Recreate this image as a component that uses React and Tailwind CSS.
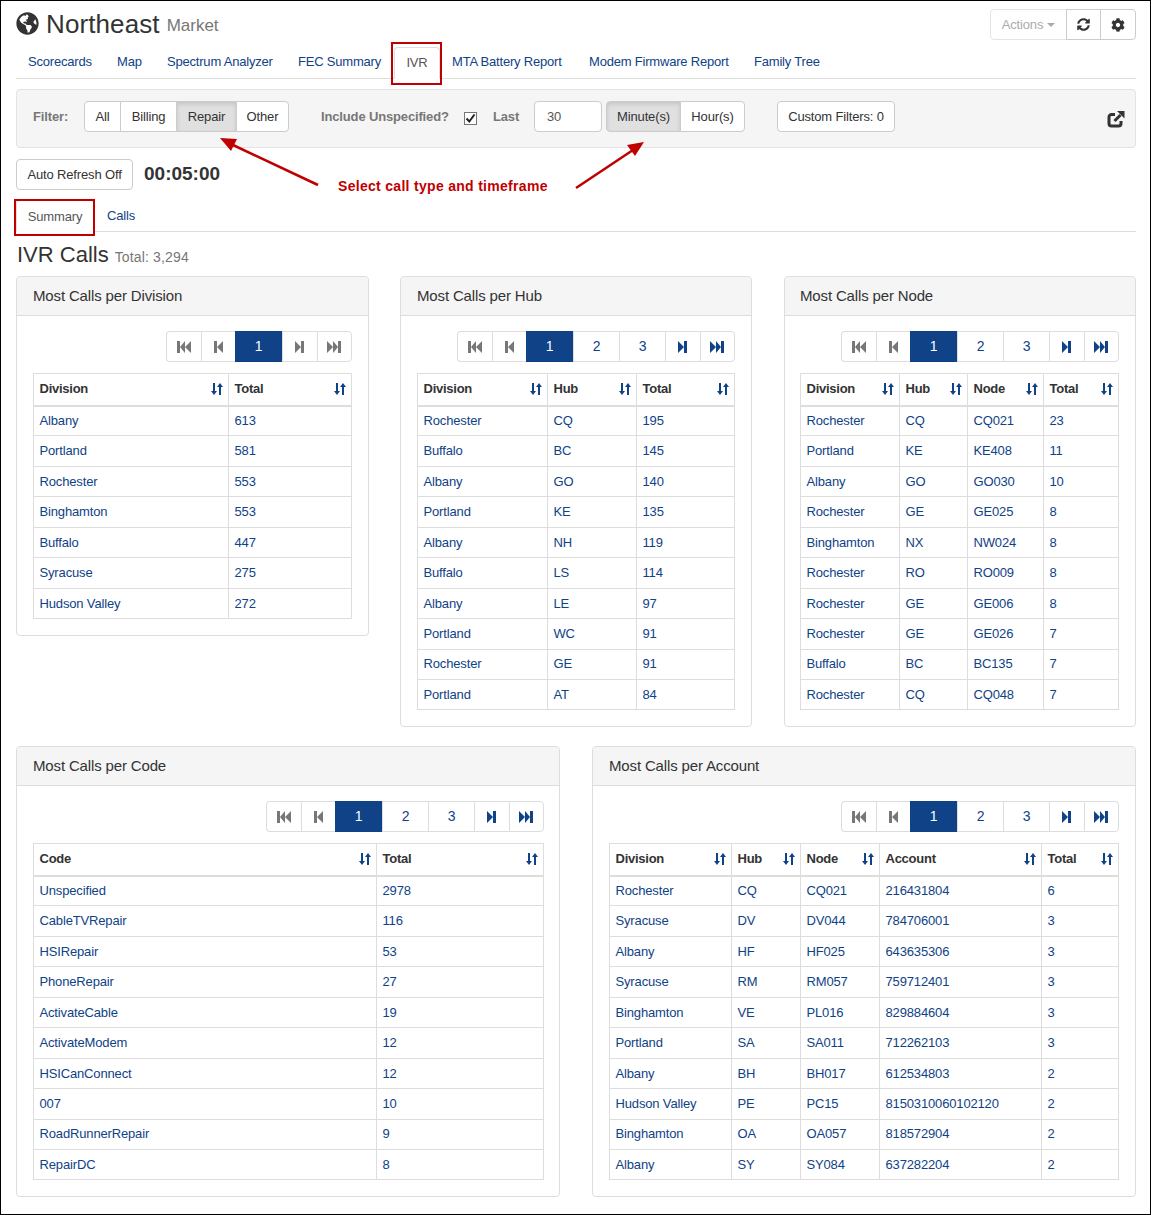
import { FaGlobeAmericas, FaSyncAlt, FaCog } from "react-icons/fa";

const navItems = [
  { label: "Scorecards", w: "w-[89px]" },
  { label: "Map", w: "w-[50px]" },
  { label: "Spectrum Analyzer", w: "w-[131px]" },
  { label: "FEC Summary", w: "w-[108px]" },
  { label: "IVR", w: "w-[46px]" },
  { label: "MTA Battery Report", w: "w-[137px]" },
  { label: "Modem Firmware Report", w: "w-[165px]" },
  { label: "Family Tree", w: "w-[100px]" },
];

const tables = {
  division: {
    title: "Most Calls per Division",
    pages: [],
    widths: [195, 123],
    columns: ["Division", "Total"],
    rows: [
      ["Albany", "613"],
      ["Portland", "581"],
      ["Rochester", "553"],
      ["Binghamton", "553"],
      ["Buffalo", "447"],
      ["Syracuse", "275"],
      ["Hudson Valley", "272"],
    ],
  },
  hub: {
    title: "Most Calls per Hub",
    pages: [2, 3],
    widths: [130, 89, 98],
    columns: ["Division", "Hub", "Total"],
    rows: [
      ["Rochester", "CQ", "195"],
      ["Buffalo", "BC", "145"],
      ["Albany", "GO", "140"],
      ["Portland", "KE", "135"],
      ["Albany", "NH", "119"],
      ["Buffalo", "LS", "114"],
      ["Albany", "LE", "97"],
      ["Portland", "WC", "91"],
      ["Rochester", "GE", "91"],
      ["Portland", "AT", "84"],
    ],
  },
  node: {
    title: "Most Calls per Node",
    pages: [2, 3],
    widths: [99, 68, 76, 75],
    columns: ["Division", "Hub", "Node", "Total"],
    rows: [
      ["Rochester", "CQ", "CQ021", "23"],
      ["Portland", "KE", "KE408", "11"],
      ["Albany", "GO", "GO030", "10"],
      ["Rochester", "GE", "GE025", "8"],
      ["Binghamton", "NX", "NW024", "8"],
      ["Rochester", "RO", "RO009", "8"],
      ["Rochester", "GE", "GE006", "8"],
      ["Rochester", "GE", "GE026", "7"],
      ["Buffalo", "BC", "BC135", "7"],
      ["Rochester", "CQ", "CQ048", "7"],
    ],
  },
  code: {
    title: "Most Calls per Code",
    pages: [2, 3],
    widths: [343, 167],
    columns: ["Code", "Total"],
    rows: [
      ["Unspecified", "2978"],
      ["CableTVRepair", "116"],
      ["HSIRepair", "53"],
      ["PhoneRepair", "27"],
      ["ActivateCable", "19"],
      ["ActivateModem", "12"],
      ["HSICanConnect", "12"],
      ["007", "10"],
      ["RoadRunnerRepair", "9"],
      ["RepairDC", "8"],
    ],
  },
  account: {
    title: "Most Calls per Account",
    pages: [2, 3],
    widths: [122, 69, 79, 162, 77],
    columns: ["Division", "Hub", "Node", "Account", "Total"],
    rows: [
      ["Rochester", "CQ", "CQ021", "216431804", "6"],
      ["Syracuse", "DV", "DV044", "784706001", "3"],
      ["Albany", "HF", "HF025", "643635306", "3"],
      ["Syracuse", "RM", "RM057", "759712401", "3"],
      ["Binghamton", "VE", "PL016", "829884604", "3"],
      ["Portland", "SA", "SA011", "712262103", "3"],
      ["Albany", "BH", "BH017", "612534803", "2"],
      ["Hudson Valley", "PE", "PC15", "8150310060102120", "2"],
      ["Binghamton", "OA", "OA057", "818572904", "2"],
      ["Albany", "SY", "SY084", "637282204", "2"],
    ],
  },
};

function SortIcon() {
  return (
    <svg width="14" height="14" viewBox="0 0 14 14" className="text-[#0f4287] shrink-0 -mr-px">
      <path d="M3 1h2v8h2L4 13 1 9h2z M9 13h2V5h2L10 1 7 5h2z" fill="currentColor" />
    </svg>
  );
}

function StepIcon({ double, flip, muted }) {
  return (
    <svg width="14" height="12" viewBox="0 0 14 12" className={`${muted ? "text-[#777]" : "text-[#0f4287]"} ${flip ? "rotate-180" : ""}`}>
      {double ? (
        <path d="M0 0h3v12H0z M3 6l5-6v12z M8 6l6-6v12z" fill="currentColor" />
      ) : (
        <path d="M3 0h3v12H3z M6 6l6-6v12z" fill="currentColor" />
      )}
    </svg>
  );
}

function Pager({ pages, className = "" }) {
  const hasMore = pages.length > 0;
  const cell = "h-[31px] flex items-center justify-center border-y border-l border-[#ddd]";
  return (
    <div className={`flex justify-end text-[14px] ${className}`}>
      <div className={`${cell} w-[34.5px] rounded-l`}><StepIcon double muted /></div>
      <div className={`${cell} w-[34.5px]`}><StepIcon muted /></div>
      <div className="h-[31px] w-[47px] flex items-center justify-center bg-[#0f4287] text-white">1</div>
      {pages.map((p) => (
        <div key={p} className={`${cell} w-[46px] text-[#0f4287]`}>{p}</div>
      ))}
      <div className={`${cell} w-[34.5px]`}><StepIcon flip muted={!hasMore} /></div>
      <div className={`${cell} w-[35.5px] border-r rounded-r`}><StepIcon double flip muted={!hasMore} /></div>
    </div>
  );
}

function DataTable({ widths, columns, rows, className = "" }) {
  return (
    <table className={`table-fixed border-collapse mt-[11px] w-full text-[13px] ${className}`}>
      <colgroup>
        {widths.map((w, i) => (
          <col key={i} style={{ width: w }} />
        ))}
      </colgroup>
      <thead>
        <tr className="h-[32px]">
          {columns.map((c) => (
            <th key={c} className="border border-b-2 border-[#ddd] px-[5.5px] pb-px text-left font-bold text-[#333] tracking-[-0.25px]">
              <div className="flex items-center justify-between">
                {c}
                <SortIcon />
              </div>
            </th>
          ))}
        </tr>
      </thead>
      <tbody>
        {rows.map((row, i) => (
          <tr key={i} className="h-[30.44px]">
            {row.map((v, j) => (
              <td key={j} className="border border-[#ddd] px-[5.5px] text-[#0f4287]">
                {v}
              </td>
            ))}
          </tr>
        ))}
      </tbody>
    </table>
  );
}

function Panel({ data, className = "", titleClass = "", pagerClass, tableClass }) {
  return (
    <div className={`border border-[#ddd] rounded bg-white ${className}`}>
      <div className={`h-[39px] bg-[#f5f5f5] border-b border-[#ddd] rounded-t flex items-center px-4 text-[15px] text-[#333] ${titleClass}`}>
        {data.title}
      </div>
      <div className="px-4 pt-[15px] pb-4">
        <Pager pages={data.pages} className={pagerClass} />
        <DataTable widths={data.widths} columns={data.columns} rows={data.rows} className={tableClass} />
      </div>
    </div>
  );
}

function Seg({ label, active, className }) {
  return (
    <div
      className={`h-[31px] flex items-center justify-center border border-[#ccc] -ml-px first:ml-0 first:rounded-l last:rounded-r ${
        active ? "bg-[#e0e0e0] border-[#adadad] shadow-[inset_0_2px_4px_rgba(0,0,0,0.13)]" : "bg-white"
      } ${className}`}
    >
      {label}
    </div>
  );
}

export default function App() {
  return (
    <div className="relative box-border w-[1151px] h-[1215px] border border-black bg-white pl-[15px] pr-[14px] pt-[7px] overflow-hidden text-[13px] tracking-[-0.15px] text-[#333] font-['Liberation_Sans',Arial,sans-serif]">
      {/* title */}
      <div className="flex justify-between h-[37px]">
        <div className="flex items-center h-[31px]">
          <FaGlobeAmericas className="w-[23px] h-[23px] text-[#333] mr-[7px]" />
          <span className="text-[26px] leading-none tracking-[0.1px]">Northeast</span>
          <span className="ml-[7px] mt-[4px] text-[17px] leading-none tracking-normal text-[#777]">Market</span>
        </div>
        <div className="flex h-[31px] mt-[1px]">
          <div className="w-[77px] flex items-center justify-center gap-1 border border-[#e4e4e4] rounded-l text-[#aaa]">
            Actions
            <span className="border-x-[4px] border-x-transparent border-t-[4px] border-t-[#aaa] mt-[1px]" />
          </div>
          <div className="w-[35px] -ml-px flex items-center justify-center border border-[#ccc]"><FaSyncAlt className="w-[13px] h-[13px] text-[#333]" /></div>
          <div className="w-[36px] -ml-px flex items-center justify-center border border-[#ccc] rounded-r"><FaCog className="w-[14px] h-[14px] text-[#333]" /></div>
        </div>
      </div>

      {/* nav tabs */}
      <div className="flex h-[34px] border-b border-[#ddd] text-[#0f4287] tracking-[-0.2px]">
        {navItems.map((n) =>
          n.label === "IVR" ? (
            <div key={n.label} className={`${n.w} mt-[2px] h-[32px] flex items-center justify-center border border-b-white border-[#ddd] rounded-t text-[#555] bg-white`}>
              {n.label}
            </div>
          ) : (
            <div key={n.label} className={`${n.w} h-[33px] flex items-center pl-[12px] pt-px whitespace-nowrap`}>
              {n.label}
            </div>
          )
        )}
      </div>

      {/* filter well */}
      <div className="mt-[10px] h-[59px] flex items-start border border-[#e3e3e3] rounded bg-[#f5f5f5] pl-[16px] pr-[10px] pt-[11px]">
        <div className="flex items-center h-[31px] w-full">
          <span className="font-bold text-[#777] w-[51px]">Filter:</span>
          <div className="flex">
            <Seg label="All" className="w-[37px]" />
            <Seg label="Billing" className="w-[57px]" />
            <Seg label="Repair" active className="w-[61px]" />
            <Seg label="Other" className="w-[53px]" />
          </div>
          <span className="ml-[32px] font-bold text-[#777] w-[143px]">Include Unspecified?</span>
          <span className="w-[13px] h-[13px] mt-[3px] border border-[#767676] bg-white flex items-center justify-center">
            <svg width="11" height="11" viewBox="0 0 11 11"><path d="M1.5 5.5l2.8 3L9.5 1.5" fill="none" stroke="#222" strokeWidth="2" /></svg>
          </span>
          <span className="ml-[16px] font-bold text-[#777] w-[41px]">Last</span>
          <div className="w-[68px] h-[31px] border border-[#ccc] rounded bg-white flex items-center px-[12px] text-[#555]">30</div>
          <div className="flex ml-[4px]">
            <Seg label="Minute(s)" active className="w-[75px]" />
            <Seg label="Hour(s)" className="w-[65px]" />
          </div>
          <div className="ml-[32px] w-[118px] h-[31px] border border-[#ccc] rounded bg-white flex items-center justify-center">Custom Filters: 0</div>
          <svg width="18" height="18" viewBox="0 0 18 18" className="ml-auto mt-[4px]">
            <path d="M8 4.500H4.500a2.500 2.500 0 0 0-2.500 2.500v6.500a2.500 2.500 0 0 0 2.500 2.500h7a2.500 2.500 0 0 0 2.500-2.500V11" fill="none" stroke="#333" strokeWidth="3" />
            <path d="M10 1h7.500v7.500z" fill="#333" />
            <path d="M7.500 11L13.500 5" fill="none" stroke="#333" strokeWidth="3" />
          </svg>
        </div>
      </div>

      {/* refresh */}
      <div className="mt-[11px] flex items-center h-[31px]">
        <div className="w-[117px] h-[31px] border border-[#ccc] rounded flex items-center justify-center">Auto Refresh Off</div>
        <span className="ml-[11px] mb-[1px] text-[19px] tracking-normal font-bold">00:05:00</span>
      </div>

      {/* sub tabs */}
      <div className="mt-[10px] h-[32px] flex border-b border-[#ddd]">
        <div className="w-[78px] h-[32px] pt-px flex items-center justify-center text-[#555] border border-b-white border-[#ddd] rounded-t bg-white">Summary</div>
        <div className="h-[31px] pt-px flex items-center ml-[13px] text-[#0f4287]">Calls</div>
      </div>

      <div className="mt-[9px] h-[35px] flex items-baseline pl-[1px]">
        <span className="text-[22px] leading-[28px] tracking-normal">IVR Calls</span>
        <span className="ml-[6px] text-[14px] tracking-[0.15px] text-[#777]">Total: 3,294</span>
      </div>

      {/* panels */}
      <div className="h-[451px] grid grid-cols-[384px_384px_352px] items-start">
        <Panel data={tables.division} className="w-[353px]" />
        <Panel data={tables.hub} className="w-[352px]" />
        <Panel data={tables.node} titleClass="pl-[15px]" tableClass="-ml-px" />
      </div>
      <div className="mt-[19px] grid grid-cols-[544px_544px] gap-x-[32px] items-start">
        <Panel data={tables.code} pagerClass="-mr-px" />
        <Panel data={tables.account} />
      </div>

      {/* annotations */}
      <div className="absolute left-[390px] top-[41px] w-[51px] h-[43px] border-2 border-[#c00000]" />
      <div className="absolute left-[13px] top-[198px] w-[81px] h-[37px] border-2 border-[#c00000]" />
      <div className="absolute left-[337px] top-[175px] text-[14px] tracking-[0.3px] font-bold text-[#c00000]">Select call type and timeframe</div>
      <svg className="absolute left-0 top-0" width="1151" height="240">
        <path d="M317 184L232 144" stroke="#c00000" strokeWidth="2.5" fill="none" />
        <path d="M219 137L236 138L230 150z" fill="#c00000" />
        <path d="M575 187L632 149" stroke="#c00000" strokeWidth="2.5" fill="none" />
        <path d="M643 141L626 144L634 155z" fill="#c00000" />
      </svg>
    </div>
  );
}
